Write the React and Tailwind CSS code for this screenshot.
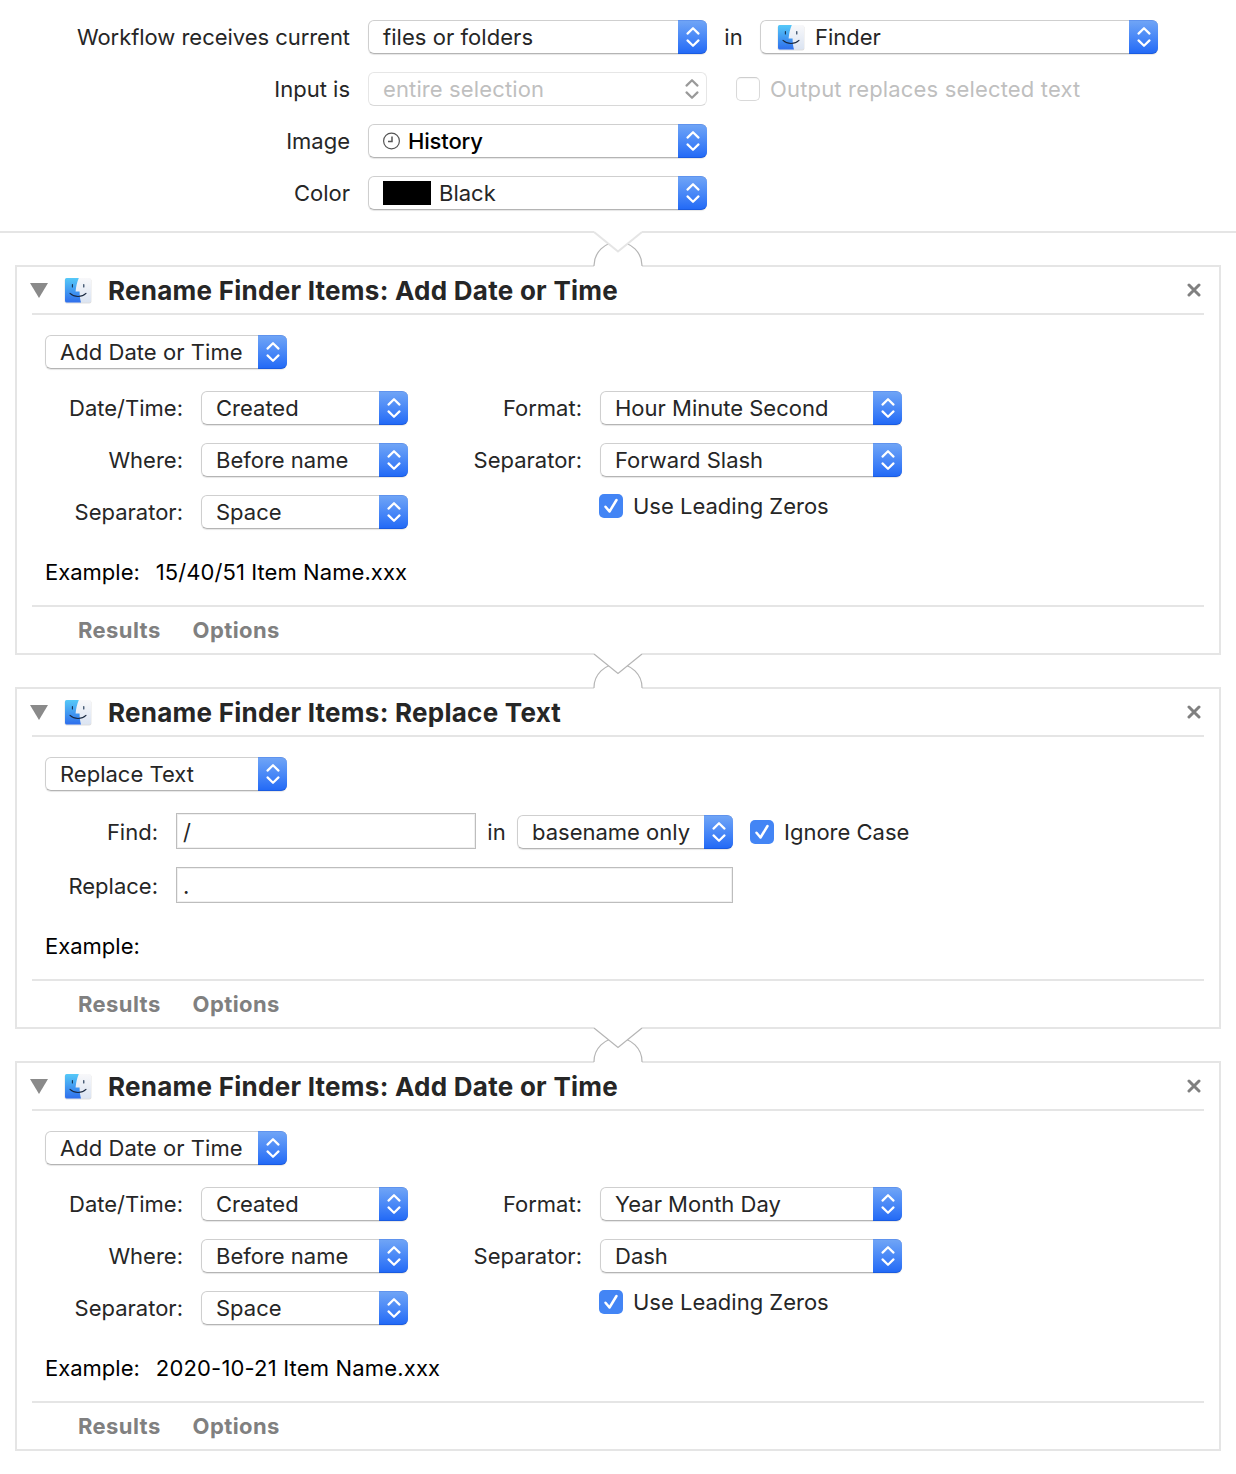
import { useId } from "react";

function Arrows({ disabled }) {
  return (
    <span
      className={
        disabled
          ? "flex w-[29px] shrink-0 items-center justify-center self-stretch text-[#9a9a9a]"
          : "-my-px -mr-px flex w-[29px] shrink-0 items-center justify-center self-stretch rounded-r-[6px] border-t border-b border-t-[#5f93ee] border-b-[#1a5be0] bg-linear-to-b from-[#6fa4f6] to-[#236af6] text-white"
      }
    >
      <svg width="16" height="22" viewBox="0 0 16 22" fill="none" stroke="currentColor" strokeWidth="2.2" strokeLinecap="round" strokeLinejoin="round">
        <path d="M2.5 7.600 8 2.200l5.500 5.400M2.500 14.400 8 19.800l5.500-5.400" />
      </svg>
    </span>
  );
}

function Select({ className, disabled, children }) {
  return (
    <div
      className={`flex h-[34px] shrink-0 items-center rounded-[6px] border pl-[14px] ${
        disabled
          ? "border-[#e6e6e6] border-b-[#d8d8d8] tracking-[0.12px] text-[#bfbfbf]"
          : "border-[#cfcfcf] border-b-[#b4b4b4] shadow-[0_1px_1px_rgba(0,0,0,0.1)]"
      } ${className}`}
    >
      <span className="flex flex-1 items-center whitespace-nowrap">{children}</span>
      <Arrows disabled={disabled} />
    </div>
  );
}

function Checkbox({ checked }) {
  if (!checked) {
    return <span className="size-6 shrink-0 rounded-[5px] border border-[#d9d9d9] border-t-[#cecece] shadow-[inset_0_1px_1px_rgba(0,0,0,0.04)]" />;
  }
  return (
    <span className="flex size-6 shrink-0 items-center justify-center rounded-[5px] bg-[#4385f5]">
      <svg width="24" height="24" viewBox="0 0 24 24" fill="none" stroke="white" strokeWidth="2.5" strokeLinecap="round" strokeLinejoin="round">
        <path d="m6.500 12.800 4 4.700 7-11.500" />
      </svg>
    </span>
  );
}

function FinderIcon() {
  const id = useId();
  return (
    <svg width="30" height="28" viewBox="0 0 30 28" className="shrink-0" fill="none">
      <defs>
        <linearGradient id={`${id}b`} x1="0" y1="0" x2="0" y2="1">
          <stop offset="0" stopColor="#56c9f8" />
          <stop offset="1" stopColor="#2f6fec" />
        </linearGradient>
        <linearGradient id={`${id}w`} x1="0" y1="0" x2="0" y2="1">
          <stop offset="0" stopColor="#f8f8fa" />
          <stop offset="1" stopColor="#dbe4f2" />
        </linearGradient>
      </defs>
      <rect x="1.600" y="2.400" width="26.800" height="25" rx="2" fill="#000" opacity="0.13" />
      <rect x="2" y="2" width="26" height="24.400" rx="1.600" fill={`url(#${id}w)`} />
      <path d="M3.600 2H15.800C14 6.500 13 10.500 12.600 15.600H16.600C16.600 19.800 17.100 23.300 18 26.400H3.600A1.600 1.600 0 0 1 2 24.800V3.600A1.600 1.600 0 0 1 3.600 2Z" fill={`url(#${id}b)`} />
      <path d="M9.400 8.600v2.400M20.800 8.600v2.400" stroke="#17304f" strokeWidth="1.100" strokeLinecap="round" />
      <path d="M7 17.400c4.600 4.200 11.600 4.200 16 0" stroke="#17263d" strokeWidth="1.100" strokeLinecap="round" />
    </svg>
  );
}

function Connector({ notch }) {
  return (
    <div className="relative h-8">
      <svg className="absolute -top-0.5 left-1/2 -translate-x-1/2" width="52" height="36" viewBox="0 0 52 36" fill="none">
        <path d="M2 0H50V36H2Z" fill="white" />
        <path d="M2 35V34.500A24 23.500 0 0 1 50 34.500V35" stroke="#b5b5b5" strokeWidth="1.200" />
        <path d="M2 0V1L26 20.500 50 1V0Z" fill="white" />
        <path d="M2 1 26 20.500 50 1" stroke={notch} strokeWidth={notch === "#e5e5e5" ? 2 : 1.2} />
      </svg>
    </div>
  );
}

function Card({ title, bodyHeight, children }) {
  return (
    <section className="mx-[15px] border-2 border-[#e5e5e5] px-[15px]">
      <header className="flex h-12 items-center border-b-2 border-[#e5e5e5]">
        <svg width="18" height="15" viewBox="0 0 18 15" className="-ml-[2px] shrink-0">
          <path d="M0 0H18L9 15Z" fill="#8a8a8a" />
        </svg>
        <span className="ml-[15px] flex"><FinderIcon /></span>
        <h2 className="ml-[15px] flex-1 pt-0.5 text-[26px] font-bold tracking-[0.26px] whitespace-nowrap">{title}</h2>
        <svg width="14" height="14" viewBox="0 0 14 14" className="mr-[3px]" stroke="#808080" strokeWidth="3" strokeLinecap="round">
          <path d="m2 2 10 10M12 2 2 12" />
        </svg>
      </header>
      <div className={`px-[13px] pt-5 ${bodyHeight}`}>{children}</div>
      <footer className="flex h-12 items-center gap-8 border-t-2 border-[#e5e5e5] pl-[46px] font-bold tracking-[0.4px] text-[#808080]">
        <span>Results</span>
        <span>Options</span>
      </footer>
    </section>
  );
}

function Field({ label, labelWidth, children }) {
  return (
    <div className="flex h-[34px] items-center">
      <span className={`${labelWidth} shrink-0 text-right whitespace-nowrap`}>{label}</span>
      {children}
    </div>
  );
}

function DateCard({ format, separator, example, exampleClass }) {
  return (
    <Card title="Rename Finder Items: Add Date or Time" bodyHeight="h-[290px]">
      <Select className="w-[242px] tracking-[0.05px]">Add Date or Time</Select>
      <div className="mt-[22px] flex">
        <div className="flex flex-col gap-[18px]">
          <Field label="Date/Time:" labelWidth="w-[138px]"><Select className="ml-[18px] w-[207px]">Created</Select></Field>
          <Field label="Where:" labelWidth="w-[138px]"><Select className="ml-[18px] w-[207px]">Before name</Select></Field>
          <Field label="Separator:" labelWidth="w-[138px]"><Select className="ml-[18px] w-[207px]">Space</Select></Field>
        </div>
        <div className="flex flex-col gap-[18px]">
          <Field label="Format:" labelWidth="w-[174px]"><Select className="ml-[18px] w-[302px]">{format}</Select></Field>
          <Field label="Separator:" labelWidth="w-[174px]"><Select className="ml-[18px] w-[302px]">{separator}</Select></Field>
          <div className="-mt-px ml-[191px] flex h-6 items-center gap-[10px]">
            <Checkbox checked />
            <span>Use Leading Zeros</span>
          </div>
        </div>
      </div>
      <p className="mt-[27px] flex gap-4 text-black"><span>Example:</span><span className={exampleClass}>{example}</span></p>
    </Card>
  );
}

export default function App() {
  return (
    <main className="min-h-[1474px] w-[1236px] bg-white font-[Inter,'Liberation_Sans',sans-serif] text-[22px] leading-8 text-[#262626]">
      <div className="flex h-[233px] flex-col gap-[18px] border-b-2 border-[#e5e5e5] pt-5">
        <Field label={<span className="tracking-[-0.04px]">Workflow receives current</span>} labelWidth="w-[350px]">
          <Select className="ml-[18px] w-[339px] tracking-[0.05px]">files or folders</Select>
          <span className="w-[53px] text-center">in</span>
          <Select className="w-[398px]"><span className="ml-px flex"><FinderIcon /></span><span className="ml-[9px]">Finder</span></Select>
        </Field>
        <Field label="Input is" labelWidth="w-[350px]">
          <Select disabled className="ml-[18px] w-[339px]">entire selection</Select>
          <span className="ml-[29px] flex items-center gap-[10px] tracking-[0.17px] text-[#bfbfbf]"><Checkbox />Output replaces selected text</span>
        </Field>
        <Field label="Image" labelWidth="w-[350px]">
          <Select className="ml-[18px] w-[339px]">
            <svg width="18" height="18" viewBox="0 0 18 18" fill="none" stroke="#555" strokeWidth="1.200">
              <circle cx="8.500" cy="9" r="7.900" />
              <path d="M9 4.500V9.500H5" strokeWidth="1.500" />
            </svg>
            <span className="ml-[7px] font-medium tracking-[-0.15px] text-black">History</span>
          </Select>
        </Field>
        <Field label="Color" labelWidth="w-[350px]">
          <Select className="ml-[18px] w-[339px]"><span className="mr-2 h-6 w-12 bg-black" />Black</Select>
        </Field>
      </div>
      <Connector notch="#e5e5e5" />
      <DateCard format="Hour Minute Second" separator="Forward Slash" example="15/40/51 Item Name.xxx" exampleClass="tracking-[0.07px]" />
      <Connector notch="#b5b5b5" />
      <Card title="Rename Finder Items: Replace Text" bodyHeight="h-[242px]">
        <Select className="w-[242px]">Replace Text</Select>
        <div className="mt-[22px] flex flex-col gap-[18px]">
          <div className="flex h-9 items-center">
            <span className="w-[113px] pt-0.5 text-right">Find:</span>
            <span className="ml-[18px] flex h-9 w-[300px] items-center border border-[#bdbdbd] pt-0.5 pl-[6px] shadow-[inset_0_0_0_1px_#f0f0f0]">/</span>
            <span className="w-[41px] pt-0.5 text-center">in</span>
            <Select className="mt-0.5 w-[216px]">basename only</Select>
            <span className="ml-[17px] flex items-center gap-[10px] pt-0.5"><Checkbox checked />Ignore Case</span>
          </div>
          <div className="flex h-9 items-center">
            <span className="w-[113px] pt-0.5 text-right">Replace:</span>
            <span className="ml-[18px] flex h-9 w-[557px] items-center border border-[#bdbdbd] pt-0.5 pl-[6px] shadow-[inset_0_0_0_1px_#f0f0f0]">.</span>
          </div>
        </div>
        <p className="mt-[27px] text-black">Example:</p>
      </Card>
      <Connector notch="#b5b5b5" />
      <DateCard format="Year Month Day" separator="Dash" example="2020-10-21 Item Name.xxx" exampleClass="tracking-[0.17px]" />
    </main>
  );
}
